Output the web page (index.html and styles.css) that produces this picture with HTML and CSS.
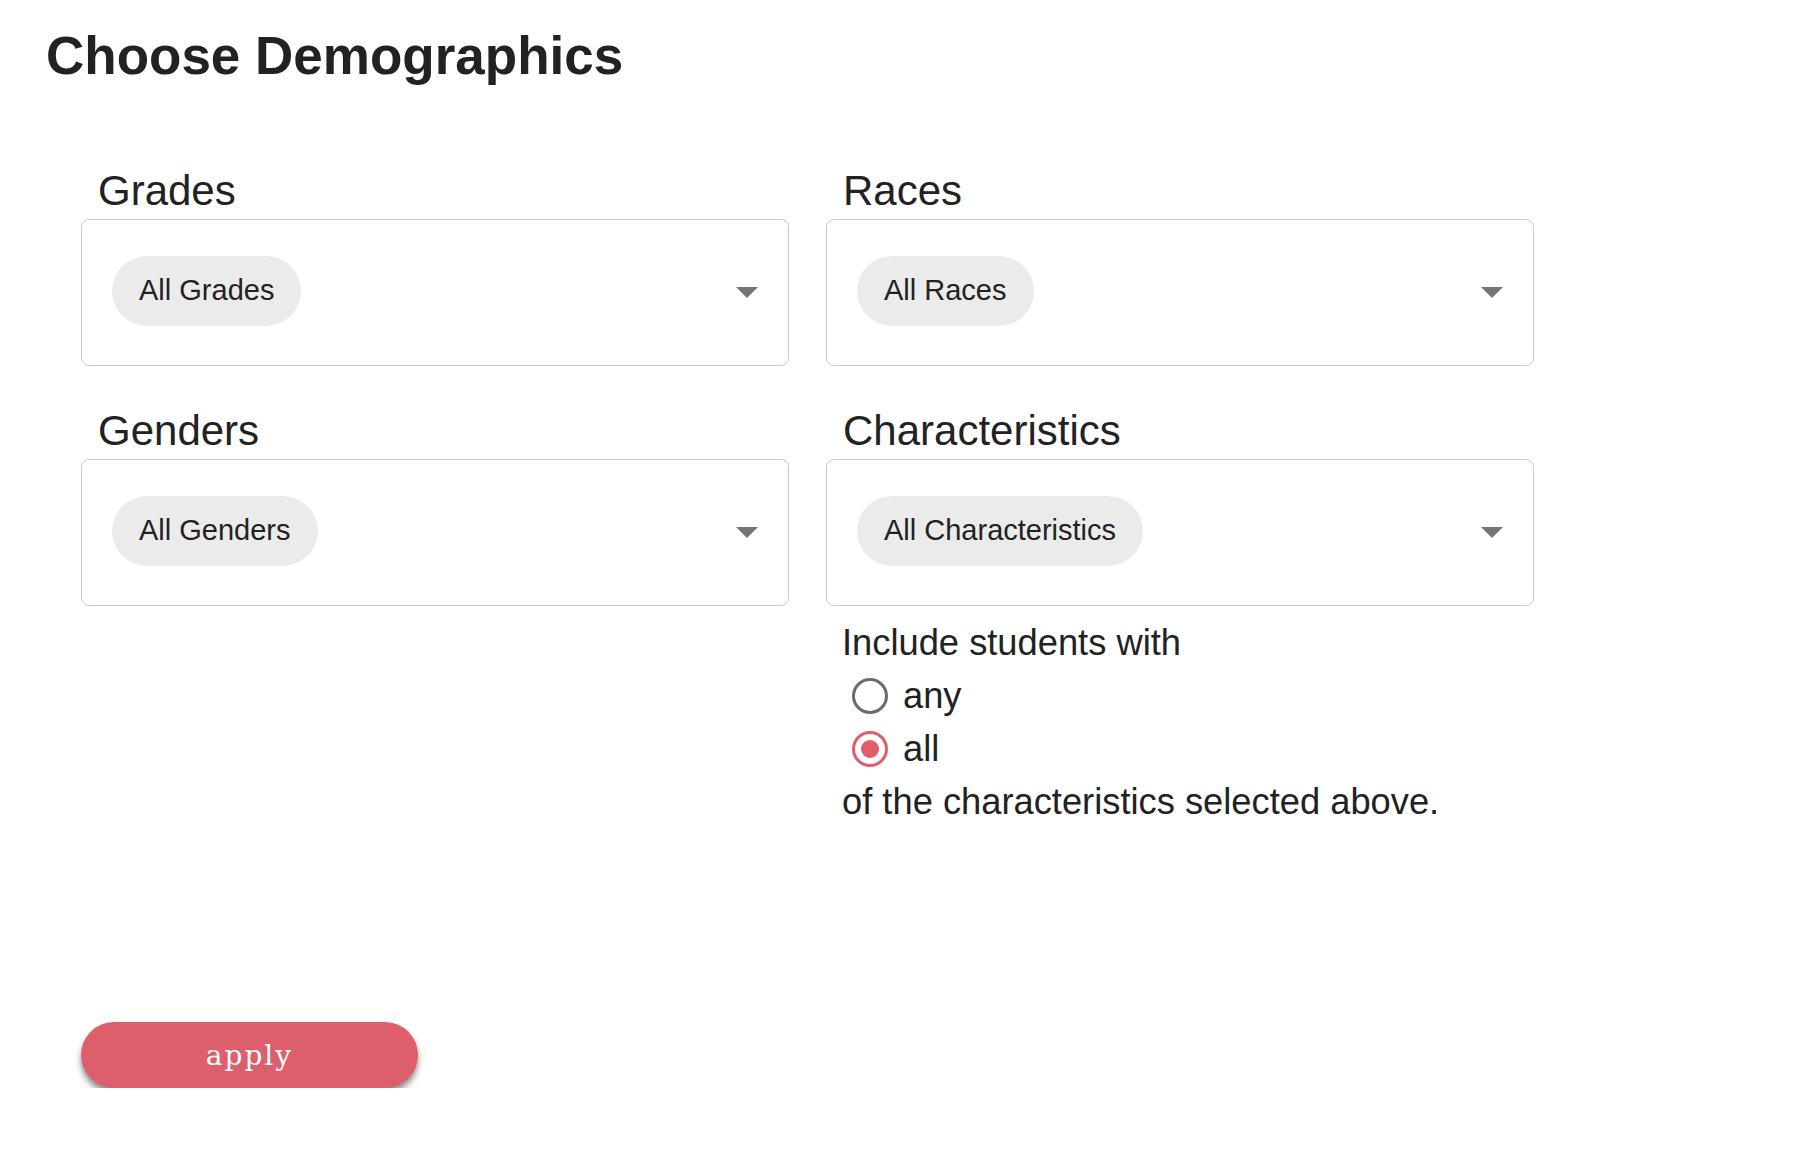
FILE: index.html
```html
<!DOCTYPE html>
<html lang="en">
<head>
<meta charset="utf-8">
<title>Choose Demographics</title>
<link rel="stylesheet" href="styles.css">
</head>
<body>
<main class="page">
  <h1 class="title">Choose Demographics</h1>
  <div class="grid">
    <section class="field">
      <div class="label">Grades</div>
      <div class="select">
        <span class="chip">All Grades</span>
        <svg class="arrow" width="22" height="11" viewBox="0 0 22 11"><path d="M0 0H22L11 11Z" fill="#757575"/></svg>
      </div>
    </section>
    <section class="field">
      <div class="label">Races</div>
      <div class="select">
        <span class="chip">All Races</span>
        <svg class="arrow" width="22" height="11" viewBox="0 0 22 11"><path d="M0 0H22L11 11Z" fill="#757575"/></svg>
      </div>
    </section>
    <section class="field">
      <div class="label">Genders</div>
      <div class="select">
        <span class="chip">All Genders</span>
        <svg class="arrow" width="22" height="11" viewBox="0 0 22 11"><path d="M0 0H22L11 11Z" fill="#757575"/></svg>
      </div>
    </section>
    <section class="field">
      <div class="label">Characteristics</div>
      <div class="select">
        <span class="chip">All Characteristics</span>
        <svg class="arrow" width="22" height="11" viewBox="0 0 22 11"><path d="M0 0H22L11 11Z" fill="#757575"/></svg>
      </div>
      <div class="include">
        <div class="line">Include students with</div>
        <label class="line radio-row"><input type="radio" name="mode" class="radio"><span>any</span></label>
        <label class="line radio-row"><input type="radio" name="mode" class="radio" checked><span>all</span></label>
        <div class="line">of the characteristics selected above.</div>
      </div>
    </section>
  </div>
  <div class="actions">
    <button class="apply" type="button">apply</button>
  </div>
</main>
</body>
</html>
```

FILE: styles.css
```css
html, body {
  margin: 0;
  padding: 0;
  background: #ffffff;
}

body {
  font-family: "Liberation Sans", Arial, Helvetica, sans-serif;
  color: #222222;
}

.page {
  padding: 29px 0 0 46px;
}

.title {
  margin: 0;
  font-size: 53px;
  line-height: 53px;
  font-weight: 700;
  color: #222222;
}

.grid {
  margin: 85px 0 0 35px;
  width: 1454px;
  display: grid;
  grid-template-columns: 708px 708px;
  column-gap: 37px;
  row-gap: 41px;
  align-items: start;
}

.label {
  font-size: 42px;
  line-height: 48px;
  padding-left: 17px;
  margin-bottom: 4px;
}

.select {
  box-sizing: border-box;
  height: 147px;
  border: 1px solid #cacaca;
  border-radius: 8px;
  display: flex;
  align-items: center;
  justify-content: space-between;
  padding: 0 30px 4px 30px;
}

.chip {
  display: inline-flex;
  align-items: center;
  height: 70px;
  padding: 0 27px;
  border-radius: 35px;
  background: #ebebeb;
  font-size: 29px;
  color: #222222;
}

.arrow {
  display: block;
  margin-top: 4px;
}

.include {
  margin-top: 10px;
  padding-left: 16px;
  font-size: 36.3px;
}

.line {
  height: 53px;
  line-height: 53px;
}

.radio-row {
  display: flex;
  align-items: center;
  gap: 15px;
  padding-left: 10px;
}

.radio {
  appearance: none;
  -webkit-appearance: none;
  margin: 0;
  width: 36px;
  height: 36px;
  border-radius: 50%;
  border: 3px solid #6b6b6b;
  box-sizing: border-box;
  background: #ffffff;
  display: grid;
  place-items: center;
}

.radio:checked {
  border-color: #e05d6a;
}

.radio:checked::after {
  content: "";
  width: 18px;
  height: 18px;
  border-radius: 50%;
  background: #e05d6a;
}

.actions {
  margin: 0 0 0 35px;
  padding-top: 194px;
}

.apply {
  width: 337px;
  height: 66px;
  border: none;
  border-radius: 33px;
  background: #dd5f6b;
  color: #ffffff;
  font-family: "DejaVu Serif", serif;
  font-size: 28px;
  letter-spacing: 2px;
  box-shadow: 0 5px 6px rgba(0, 0, 0, 0.45);
  cursor: pointer;
}
```
